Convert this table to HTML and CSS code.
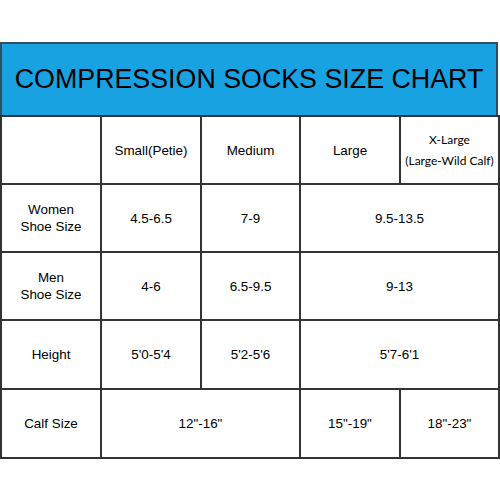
FILE: index.html
```html
<!DOCTYPE html>
<html>
<head>
<meta charset="utf-8">
<link rel="stylesheet" href="styles.css">
</head>
<body>
<div class="chart">
  <div class="title">COMPRESSION SOCKS SIZE CHART</div>
  <table class="grid">
    <colgroup>
      <col class="c1"><col class="c2"><col class="c3"><col class="c4"><col class="c5">
    </colgroup>
    <tr class="r1">
      <td></td>
      <td>Small(Petie)</td>
      <td>Medium</td>
      <td>Large</td>
      <td class="xl"><span>X-Large</span><span>(Large-Wild Calf)</span></td>
    </tr>
    <tr class="r2">
      <td class="two">Women<br>Shoe Size</td>
      <td>4.5-6.5</td>
      <td>7-9</td>
      <td colspan="2">9.5-13.5</td>
    </tr>
    <tr class="r3">
      <td class="two">Men<br>Shoe Size</td>
      <td>4-6</td>
      <td>6.5-9.5</td>
      <td colspan="2">9-13</td>
    </tr>
    <tr class="r4">
      <td>Height</td>
      <td>5'0-5'4</td>
      <td>5'2-5'6</td>
      <td colspan="2">5'7-6'1</td>
    </tr>
    <tr class="r5">
      <td>Calf Size</td>
      <td colspan="2">12"-16"</td>
      <td>15"-19"</td>
      <td>18"-23"</td>
    </tr>
  </table>
</div>
</body>
</html>
```
FILE: styles.css
```css
html, body {
  margin: 0;
  padding: 0;
  background: #ffffff;
}
body {
  font-family: "Liberation Sans", Arial, sans-serif;
  color: #000;
}
.chart {
  margin: 42px 0 0 0;
  width: 498px;
}
.title {
  height: 73px;
  box-sizing: border-box;
  background: #18a2e2;
  border: 2px solid #2f4f66;
  border-bottom: none;
  display: flex;
  align-items: center;
  justify-content: center;
  font-size: 26.8px;
  color: #000;
  white-space: nowrap;
}
.grid {
  width: 498px;
  border-collapse: collapse;
  table-layout: fixed;
  border: 2px solid #333;
}
.c1 { width: 100px; }
.c2 { width: 100px; }
.c3 { width: 99px; }
.c4 { width: 100px; }
.c5 { width: 99px; }
.grid td {
  border: 2px solid #333;
  text-align: center;
  vertical-align: middle;
  padding: 0;
  font-size: 13.4px;
  line-height: 17px;
}
.r1 td, .r2 td, .r3 td { height: 66px; }
.r4 td, .r5 td { height: 67px; }
.xl span {
  display: block;
  font-family: Lato, "Liberation Sans", sans-serif;
  font-size: 12px;
  line-height: 21px;
}
```
